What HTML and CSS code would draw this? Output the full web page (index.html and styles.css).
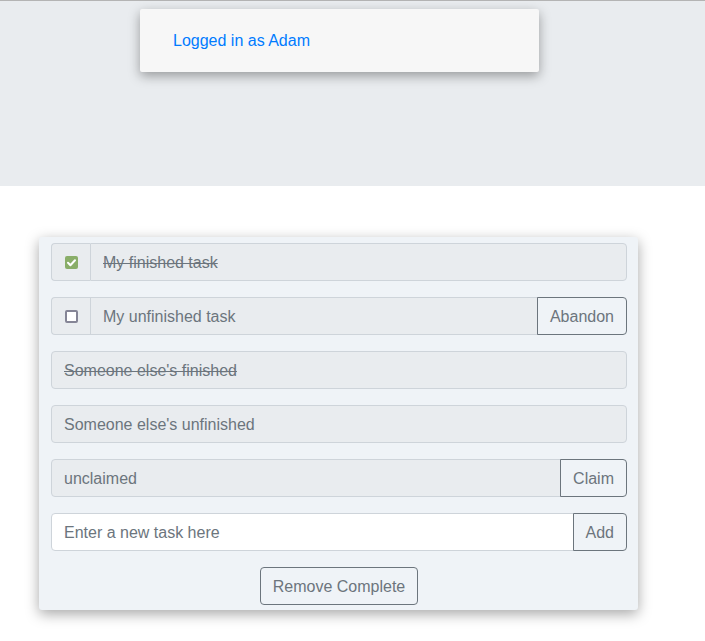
FILE: index.html
```html
<!DOCTYPE html>
<html>
<head>
<meta charset="utf-8">
<link rel="stylesheet" href="styles.css">
</head>
<body>
<div class="jumbo">
  <div class="popup"><a class="user">Logged in as Adam</a></div>
</div>
<div class="card">
  <div class="group">
    <div class="addon"><span class="check on"><svg width="13" height="13" viewBox="0 0 13 13"><path d="M3 6.8 L5.4 9.2 L10 4.2" fill="none" stroke="#fff" stroke-width="2" stroke-linecap="round" stroke-linejoin="round"/></svg></span></div>
    <div class="field done">My finished task</div>
  </div>
  <div class="group">
    <div class="addon"><span class="check"></span></div>
    <div class="field">My unfinished task</div>
    <button class="btn append">Abandon</button>
  </div>
  <div class="group">
    <div class="field done">Someone else's finished</div>
  </div>
  <div class="group">
    <div class="field">Someone else's unfinished</div>
  </div>
  <div class="group">
    <div class="field">unclaimed</div>
    <button class="btn append">Claim</button>
  </div>
  <div class="group">
    <input class="field input" placeholder="Enter a new task here">
    <button class="btn append">Add</button>
  </div>
  <div class="actions"><button class="btn">Remove Complete</button></div>
</div>
</body>
</html>
```
FILE: styles.css
```css
* { box-sizing: border-box; }
body {
  margin: 0;
  padding-bottom: 40px;
  font-family: "Liberation Sans", Arial, sans-serif;
  font-size: 16px;
  color: #212529;
  background: #fff;
}
.jumbo {
  background: #e9ecef;
  border-top: 1px solid #b4b4b4;
  height: 186px;
  padding-top: 8px;
}
.popup {
  margin-left: 140px;
  width: 399px;
  height: 63px;
  background: #f7f7f7;
  border-radius: 2px;
  box-shadow: 0 4px 12px rgba(0,0,0,0.35);
  padding: 20px 33px;
  line-height: 24px;
}
.user { color: #007bff; }
.card {
  margin: 51px 0 0 39px;
  width: 599px;
  background: #eff3f7;
  border-radius: 3px;
  box-shadow: 0 4px 14px rgba(0,0,0,0.35);
  padding: 6px 11px 5px 12px;
  display: flex;
  flex-direction: column;
  gap: 16px;
}
.group {
  display: flex;
  height: 38px;
}
.addon {
  width: 39px;
  flex: none;
  background: #e9ecef;
  border: 1px solid #ced4da;
  border-right: 0;
  border-radius: 4px 0 0 4px;
  display: flex;
  align-items: center;
  justify-content: center;
}
.check {
  width: 13px;
  height: 13px;
  border: 2px solid #858596;
  border-radius: 2px;
  background: #fff;
  display: block;
}
.check.on {
  border: 0;
  background: #8aae69;
}
.check svg { display: block; }
.field {
  flex: 1;
  min-width: 0;
  background: #e9ecef;
  border: 1px solid #ced4da;
  border-radius: 4px;
  padding: 7px 12px 5px;
  line-height: 24px;
  color: #6c757d;
  font-family: inherit;
  font-size: 16px;
}
.addon + .field { border-radius: 0 4px 4px 0; }
.group .field:not(:last-child) { border-top-right-radius: 0; border-bottom-right-radius: 0; }
.addon + .field:not(:last-child) { border-radius: 0; }
.done { text-decoration: line-through; }
.input { background: #fff; outline: none; }
.input::placeholder { color: #6c757d; opacity: 1; }
.btn {
  font-family: inherit;
  font-size: 16px;
  line-height: 24px;
  padding: 7px 12px 5px;
  color: #6c757d;
  background: transparent;
  border: 1px solid #6c757d;
  border-radius: 4px;
  cursor: pointer;
}
.append {
  border-radius: 0 4px 4px 0;
  margin-left: -1px;
}
.actions {
  display: flex;
  justify-content: center;
}
```
